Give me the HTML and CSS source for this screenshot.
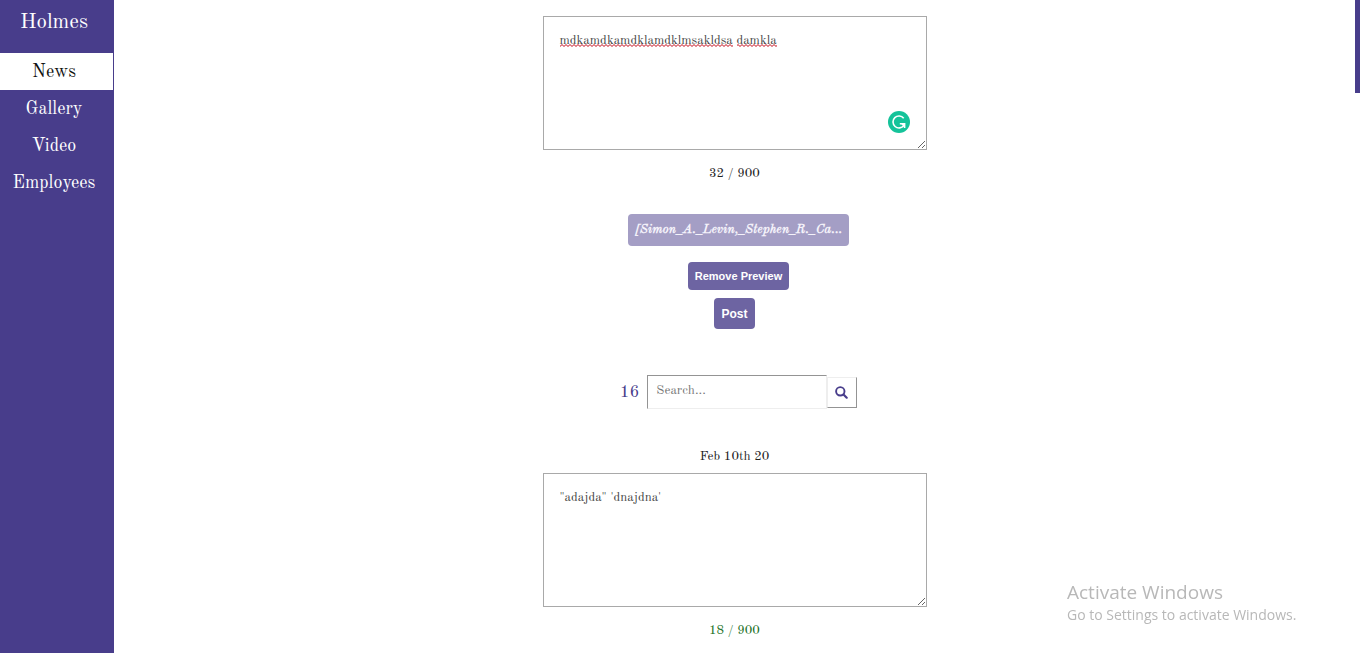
FILE: index.html
```html
<!DOCTYPE html>
<html lang="en">
<head>
<meta charset="utf-8">
<meta name="viewport" content="width=device-width, initial-scale=1">
<title>Holmes</title>
<link rel="stylesheet" href="styles.css">
</head>
<body>
<div class="layout">
  <nav class="sidebar" aria-label="Main">
    <a class="brand" href="#">Holmes</a>
    <a class="nav-link active" href="#news" aria-current="page">News</a>
    <a class="nav-link" href="#gallery">Gallery</a>
    <a class="nav-link" href="#video">Video</a>
    <a class="nav-link" href="#employees">Employees</a>
  </nav>
  <main class="content">
    <form class="composer">
      <div class="editor">
        <textarea class="post-text" aria-label="New post" spellcheck="false">mdkamdkamdklamdklmsakldsa damkla</textarea>
        <svg class="spelling" width="218" height="3" aria-hidden="true">
          <defs><pattern id="wave" width="4" height="3" patternUnits="userSpaceOnUse"><path d="M-1 1.5L0 2.5L2 .5L4 2.5L5 1.5" fill="none" stroke="#c00010"/></pattern></defs>
          <rect width="173" height="3" fill="url(#wave)"/>
          <rect x="177" width="40" height="3" fill="url(#wave)"/>
        </svg>
        <svg class="checker" width="22" height="22" viewBox="0 0 22 22" aria-hidden="true">
          <circle cx="11" cy="11" r="11" fill="#15c39a"/>
          <path d="M15.7 7.2A6 6 0 1 0 15.9 14.4M11.8 12.7H16.6V17" fill="none" stroke="#fff" stroke-width="1.6"/>
          <path d="M12.7 12.4H17V17Z" fill="#fff"/>
        </svg>
      </div>
      <p class="counter">32 / 900</p>
      <button class="button file-name" type="button">[Simon_A._Levin,_Stephen_R._Ca...</button>
      <button class="button remove" type="button">Remove Preview</button>
      <button class="button post" type="submit">Post</button>
    </form>
    <form class="search" role="search">
      <label class="total" for="query">16</label>
      <input class="query" id="query" type="text" placeholder="Search...">
      <button class="search-button" type="submit" aria-label="Search">
        <svg width="13" height="13" viewBox="0 0 13 13" aria-hidden="true"><circle cx="5.3" cy="5.3" r="4.2" fill="none" stroke="#483d8b" stroke-width="1.9"/><path d="M8.5 8.5L11.7 11.7" stroke="#483d8b" stroke-width="2.2" stroke-linecap="round"/></svg>
      </button>
    </form>
    <article class="entry">
      <time class="date" datetime="2020-02-10">Feb 10th 20</time>
      <div class="editor">
        <textarea class="post-text" aria-label="Post of Feb 10th 20" spellcheck="false">"adajda" 'dnajdna'</textarea>
      </div>
      <p class="counter saved">18 / 900</p>
    </article>
  </main>
</div>
<div class="scroll-thumb"></div>
<aside class="activation">
  <p class="activation-title">Activate Windows</p>
  <p class="activation-text">Go to Settings to activate Windows.</p>
</aside>
</body>
</html>
```
FILE: styles.css
```css
* { box-sizing: border-box; }

body {
  margin: 0;
  background: #fff;
  color: #222;
  font-family: "Old Standard TT", "Liberation Serif", serif;
  font-size: 13px;
}

p { margin: 0; }

.layout { display: flex; min-height: 100vh; }

.sidebar {
  display: flex;
  flex-direction: column;
  flex: none;
  width: 114px;
  border-right: 1px solid #483d8b;
  background: #483d8b;
  text-align: center;
}

.sidebar a { color: #fff; text-decoration: none; }

.brand {
  padding: 9px 5px 16px 0;
  font-size: 21px;
  line-height: 28px;
}

.nav-link { padding: 1px 5px 0 0; font-size: 18px; line-height: 36px; }

.sidebar .active { background: #fff; color: #111; }

.content {
  flex: 1;
  display: flex;
  flex-direction: column;
  align-items: center;
  min-width: 0;
  padding: 16px 7px 0 0;
}

.composer, .entry {
  display: flex;
  flex-direction: column;
  align-items: center;
  width: 384px;
  max-width: 100%;
}

.editor { position: relative; width: 100%; }

.post-text {
  display: block;
  width: 100%;
  height: 134px;
  padding: 15px 16px;
  border: 1px solid #a9a9a9;
  background: #fff;
  color: #444;
  font: 13px/18px "Old Standard TT", "Liberation Serif", serif;
  resize: vertical;
}

.spelling { position: absolute; left: 17px; top: 28px; }

.checker { position: absolute; right: 17px; bottom: 17px; }

.counter { padding-top: 15px; line-height: 18px; }

.saved { color: #1b701f; }

.button {
  padding: 0 7px;
  border: 0;
  border-radius: 4px;
  background: #6d64a2;
  color: #fff;
  font-family: "Liberation Sans", sans-serif;
  font-weight: bold;
}

.file-name {
  height: 32px;
  margin: 31px 0 16px 8px;
  background: #a49ec5;
  color: #f4f2fa;
  font: italic bold 13px "Old Standard TT", "Liberation Serif", serif;
}

.remove { height: 28px; margin: 0 0 8px 8px; font-size: 11px; }

.post { height: 31px; font-size: 12px; }

.search {
  display: flex;
  align-items: center;
  margin: 46px 0 0 8px;
}

.total { margin-right: 8px; color: #483d8b; font-size: 17px; }

.query {
  width: 180px;
  height: 34px;
  padding: 0 8px 2px;
  border: 1px solid;
  border-color: #949494 #eee #eee #949494;
  background: #fff;
  font: 13px "Old Standard TT", "Liberation Serif", serif;
}

.query::placeholder { color: #757575; }

.search-button {
  display: grid;
  place-items: center;
  width: 30px;
  height: 31px;
  padding: 0 1px 0 0;
  border: 1px solid;
  border-color: #eee #949494 #949494 #eee;
  background: #fff;
}

.entry { padding-top: 39px; }

.date { padding-bottom: 7px; line-height: 18px; }

.scroll-thumb {
  position: fixed;
  top: 0;
  right: 2px;
  width: 5px;
  height: 93px;
  background: #483d8b;
}

.activation {
  position: fixed;
  right: 59px;
  bottom: 27px;
  min-width: 236px;
  color: #b8b8b8;
  font-family: "Segoe UI", "Open Sans", sans-serif;
}

.activation-title { font-size: 19px; line-height: 24px; }

.activation-text { font-size: 14px; line-height: 22px; }
```
